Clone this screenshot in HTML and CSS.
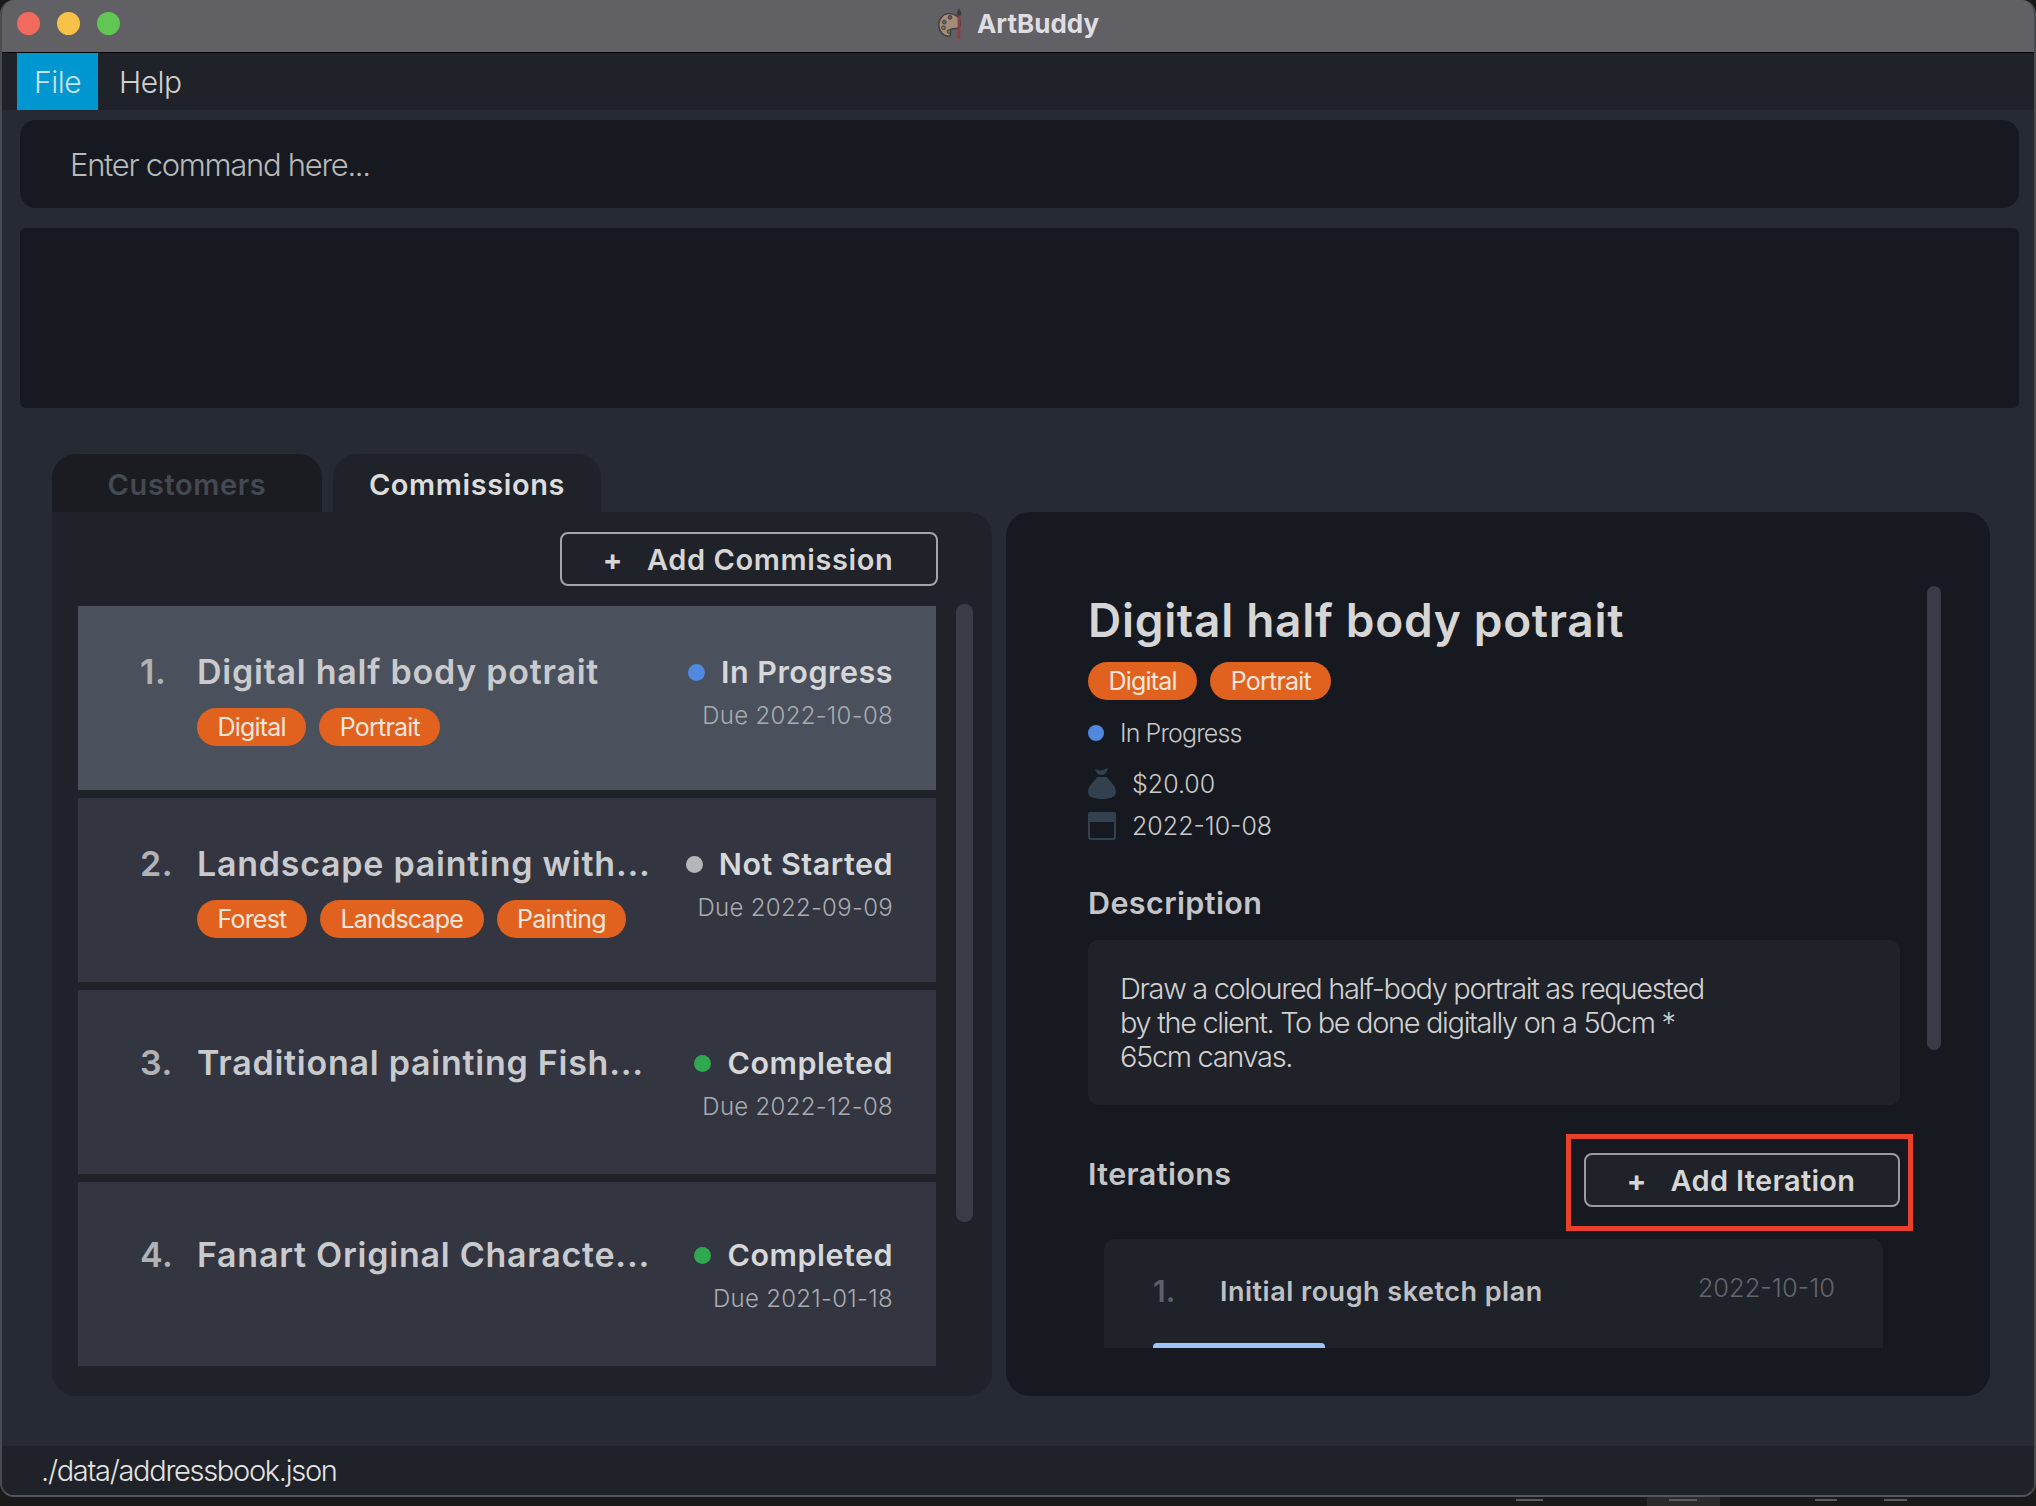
FILE: index.html
```html
<!DOCTYPE html>
<html lang="en">

<head>
    <meta charset="utf-8" />
    <title>ArtBuddy</title>
    <link rel="stylesheet" href="styles.css">
</head>

<body>
    <div class="window">
        <header class="titlebar">
            <div class="lights">
                <span class="light red"></span>
                <span class="light yellow"></span>
                <span class="light green"></span>
            </div>
            <div class="app-name">
                <svg class="palette" width="28" height="32" viewBox="0 0 28 34">
                    <path d="M12 6C5 6 1 12 1 18c0 7 5 12 10 12 3 0 3-2 2-4-1-3 1-4 4-4 4 0 7-2 7-6 0-6-6-10-12-10z" fill="#a08e78" stroke="#3f3d40" stroke-width="1.500" />
                    <circle cx="7" cy="15" r="2" fill="#4a6a8a" stroke="#3f3d40" />
                    <circle cx="13" cy="10" r="2" fill="#8a4a5a" stroke="#3f3d40" />
                    <circle cx="6" cy="21" r="2" fill="#8a7a3a" stroke="#3f3d40" />
                    <circle cx="12" cy="25" r="2" fill="#5a7a4a" stroke="#3f3d40" />
                    <path d="M21 8h3v25h-3z" fill="#8a3f4a" />
                    <path d="M20 8c0-3 1-6 2.500-8 1.500 2 2.500 5 2.500 8z" fill="#3f3d40" />
                </svg>
                <span>ArtBuddy</span>
            </div>
        </header>

        <nav class="menubar">
            <span class="menu-item active">File</span>
            <span class="menu-item">Help</span>
        </nav>

        <div class="command-box">Enter command here...</div>
        <div class="result-box"></div>

        <main class="content">
            <section class="left">
                <div class="tabs">
                    <span class="tab">Customers</span>
                    <span class="tab selected">Commissions</span>
                </div>
                <div class="left-panel">
                    <div class="left-inner">
                        <div class="add-row">
                            <button class="outline-btn add-commission"><span class="plus">+</span>Add Commission</button>
                        </div>
                        <ul class="commission-list">
                            <li class="commission highlighted">
                                <span class="index">1.</span>
                                <div class="commission-main">
                                    <div class="commission-title">Digital half body potrait</div>
                                    <div class="tags">
                                        <span class="tag">Digital</span>
                                        <span class="tag">Portrait</span>
                                    </div>
                                </div>
                                <div class="commission-side">
                                    <div class="status"><i class="dot blue"></i>In Progress</div>
                                    <div class="due">Due 2022-10-08</div>
                                </div>
                            </li>
                            <li class="commission">
                                <span class="index">2.</span>
                                <div class="commission-main">
                                    <div class="commission-title">Landscape painting with...</div>
                                    <div class="tags">
                                        <span class="tag">Forest</span>
                                        <span class="tag">Landscape</span>
                                        <span class="tag">Painting</span>
                                    </div>
                                </div>
                                <div class="commission-side">
                                    <div class="status"><i class="dot grey"></i>Not Started</div>
                                    <div class="due">Due 2022-09-09</div>
                                </div>
                            </li>
                            <li class="commission no-tags">
                                <span class="index">3.</span>
                                <div class="commission-main">
                                    <div class="commission-title">Traditional painting Fish...</div>
                                </div>
                                <div class="commission-side">
                                    <div class="status"><i class="dot green"></i>Completed</div>
                                    <div class="due">Due 2022-12-08</div>
                                </div>
                            </li>
                            <li class="commission no-tags">
                                <span class="index">4.</span>
                                <div class="commission-main">
                                    <div class="commission-title">Fanart Original Characte...</div>
                                </div>
                                <div class="commission-side">
                                    <div class="status"><i class="dot green"></i>Completed</div>
                                    <div class="due">Due 2021-01-18</div>
                                </div>
                            </li>
                        </ul>
                    </div>
                    <div class="scrollbar left-scroll"></div>
                </div>
            </section>

            <section class="detail">
                <div class="detail-inner">
                    <h1 class="detail-title">Digital half body potrait</h1>
                    <div class="tags detail-tags">
                        <span class="tag">Digital</span>
                        <span class="tag">Portrait</span>
                    </div>
                    <div class="detail-status"><i class="dot blue small"></i>In Progress</div>
                    <div class="meta meta-price">
                        <svg width="28" height="32" viewBox="0 0 28 32">
                            <path d="M7 1c3 1 5 2 8 1l5-2-2 5-3 2h-3C10 7 8 4 7 1z" fill="#33414f" />
                            <path d="M9 9h10c2 4 9 8 9 15 0 5-6 7-14 7S0 29 0 24c0-7 7-11 9-15z" fill="#33414f" />
                        </svg>
                        <span>$20.00</span>
                    </div>
                    <div class="meta">
                        <svg width="28" height="28" viewBox="0 0 28 28">
                            <rect x="0" y="0" width="28" height="10" rx="2" fill="#33414f" />
                            <rect x="1" y="1" width="26" height="26" rx="2" fill="none" stroke="#33414f" stroke-width="2" />
                        </svg>
                        <span>2022-10-08</span>
                    </div>
                    <h2 class="section-title description-title">Description</h2>
                    <p class="description">Draw a coloured half-body portrait as requested<br>by the client. To be done digitally on a 50cm *<br>65cm canvas.</p>
                    <div class="iterations-head">
                        <h2 class="section-title iterations-title">Iterations</h2>
                        <button class="outline-btn add-iteration"><span class="plus">+</span>Add Iteration</button>
                    </div>
                    <div class="iteration">
                        <div class="iteration-row">
                            <span class="iteration-index">1.</span>
                            <span class="iteration-title">Initial rough sketch plan</span>
                            <span class="iteration-date">2022-10-10</span>
                        </div>
                        <div class="iteration-image"></div>
                    </div>
                </div>
                <div class="scrollbar detail-scroll"></div>
                <div class="annotation"></div>
            </section>
        </main>

        <footer class="statusbar">./data/addressbook.json</footer>
    </div>
    <div class="desktop">
        <span class="desktop-block"></span>
        <span class="desktop-mark mark-a"></span>
        <span class="desktop-mark mark-b"></span>
        <span class="desktop-mark mark-c"></span>
        <span class="desktop-mark mark-d"></span>
    </div>
</body>

</html>
```

FILE: styles.css
```css
*,
*::before,
*::after {
    margin: 0;
    padding: 0;
    box-sizing: border-box;
}

html,
body {
    height: 100%;
    overflow: hidden;
}

body {
    background: #1a1a1b;
    font-family: Inter, "Liberation Sans", sans-serif;
    color: #d6d6d6;
}

.window {
    height: 1497px;
    display: flex;
    flex-direction: column;
    background: #262a32;
    border-radius: 14px;
    border-left: 2px solid #4a4b50;
    border-right: 2px solid #4a4b50;
    border-bottom: 2px solid #55565b;
    overflow: hidden;
}

.titlebar {
    height: 53px;
    flex: none;
    position: relative;
    display: flex;
    align-items: center;
    justify-content: center;
    padding-bottom: 5px;
    background: #616065;
    border-bottom: 1px solid #050505;
}

.lights {
    position: absolute;
    left: 15px;
    top: 12px;
    display: flex;
    gap: 17px;
}

.light {
    width: 23px;
    height: 23px;
    border-radius: 50%;
}

.light.red { background: #f26a5e; }
.light.yellow { background: #f8c14a; }
.light.green { background: #62c654; }

.app-name {
    display: flex;
    align-items: center;
    gap: 12px;
    font-size: 26px;
    font-weight: 700;
    color: #dfdde2;
}

.menubar {
    height: 57px;
    flex: none;
    display: flex;
    padding-left: 15px;
    background: #1f2229;
}

.menu-item {
    display: flex;
    align-items: center;
    padding-left: 21px;
    font-size: 30px;
    letter-spacing: -0.5px;
    font-weight: 300;
    color: #d0d0d0;
}

.menu-item.active {
    width: 81px;
    padding-left: 17px;
    background: #0096cf;
    color: #c6e4f0;
}

.command-box {
    height: 88px;
    flex: none;
    margin: 10px 15px 0 18px;
    padding-left: 50px;
    display: flex;
    align-items: center;
    background: #161920;
    border-radius: 16px;
    font-size: 31px;
    font-weight: 300;
    letter-spacing: -1.3px;
    color: #b9b9b9;
}

.result-box {
    height: 180px;
    flex: none;
    margin: 20px 15px 0 18px;
    background: #161920;
    border-radius: 6px;
}

.content {
    flex: 1;
    min-height: 0;
    display: flex;
    gap: 14px;
    padding: 46px 45px 50px 50px;
}

.left {
    width: 940px;
    flex: none;
    display: flex;
    flex-direction: column;
}

.tabs {
    height: 58px;
    flex: none;
    display: flex;
    gap: 11px;
}

.tab {
    width: 270px;
    display: flex;
    align-items: center;
    justify-content: center;
    padding-top: 2px;
    background: #1a1c21;
    border-radius: 24px 24px 0 0;
    font-size: 29px;
    font-weight: 600;
    letter-spacing: 0.6px;
    color: #454952;
}

.tab.selected {
    width: 268px;
    background: #1f2229;
    color: #dcdcdc;
}

.left-panel {
    flex: 1;
    min-height: 0;
    display: flex;
    background: #1f2229;
    border-radius: 0 24px 24px 24px;
    padding: 20px 19px 30px 26px;
}

.left-inner {
    width: 858px;
    flex: none;
    display: flex;
    flex-direction: column;
}

.add-row {
    display: flex;
    justify-content: flex-end;
    margin: 0 -2px 20px 0;
}

.outline-btn {
    display: flex;
    align-items: center;
    justify-content: center;
    height: 54px;
    padding-right: 2px;
    background: #1f2229;
    border: 2px solid #a3a5ab;
    border-radius: 8px;
    font-family: inherit;
    font-size: 29px;
    font-weight: 600;
    letter-spacing: 0.6px;
    color: #d6d6d6;
}

.plus {
    margin-right: 24px;
    font-weight: 700;
}

.add-commission {
    width: 378px;
}

.commission-list {
    list-style: none;
    display: flex;
    flex-direction: column;
    gap: 8px;
}

.commission {
    height: 184px;
    display: flex;
    padding: 46px 43px 0 62px;
    background: #333640;
    color: #c9cacd;
}

.commission.highlighted {
    background: #4b515c;
}

.commission.no-tags {
    padding-top: 53px;
}

.index {
    width: 57px;
    flex: none;
    font-size: 34px;
    font-weight: 600;
    line-height: 40px;
    letter-spacing: 0.5px;
    color: #b0b2b6;
}

.commission-main {
    flex: 1;
    min-width: 0;
}

.commission-title {
    font-size: 34px;
    font-weight: 600;
    line-height: 40px;
    letter-spacing: 0.75px;
    white-space: nowrap;
}

.tags {
    display: flex;
    gap: 13px;
    margin-top: 16px;
}

.tag {
    height: 38px;
    display: flex;
    align-items: center;
    padding: 0 20.5px;
    background: #e0621e;
    border-radius: 19px;
    font-size: 25px;
    font-weight: 400;
    letter-spacing: -0.8px;
    color: #f4e6dc;
}

.commission-side {
    flex: none;
    display: flex;
    flex-direction: column;
    align-items: flex-end;
}

.status {
    display: flex;
    align-items: center;
    font-size: 30.5px;
    font-weight: 600;
    line-height: 40px;
    letter-spacing: 0.5px;
    color: #d6d7d9;
}

.dot {
    width: 17px;
    height: 17px;
    margin-right: 16px;
    border-radius: 50%;
}

.dot.blue { background: #4f8ae0; }
.dot.grey { background: #b4b6b9; }
.dot.green { background: #2fa84f; }

.due {
    margin-top: 9px;
    font-size: 24px;
    font-weight: 300;
    letter-spacing: 0.3px;
    color: #a9abb0;
}

.scrollbar {
    background: #393c46;
    border-radius: 8px;
}

.left-scroll {
    width: 17px;
    height: 618px;
    margin: 72px 0 0 20px;
}

.detail {
    width: 984px;
    flex: none;
    position: relative;
    display: flex;
    margin-top: 58px;
    background: #161920;
    border-radius: 24px;
    padding: 74px 49px 48px 82px;
}

.detail-inner {
    width: 812px;
    flex: none;
    padding-top: 6px;
    overflow: hidden;
}

.detail-title {
    font-size: 46px;
    font-weight: 600;
    line-height: 56px;
    letter-spacing: 0.7px;
    color: #d6d6d6;
}

.detail-tags {
    margin-top: 14px;
}

.detail-status {
    display: flex;
    align-items: center;
    margin-top: 15px;
    font-size: 25px;
    font-weight: 300;
    letter-spacing: -0.9px;
    color: #c6c6c6;
    line-height: 36px;
}

.dot.small {
    width: 16px;
    height: 16px;
}

.meta {
    display: flex;
    align-items: center;
    gap: 16px;
    height: 42px;
    font-size: 25px;
    font-weight: 300;
    color: #c9c9c9;
}

.meta-price {
    margin-top: 12px;
}

.section-title {
    font-size: 30.5px;
    font-weight: 600;
    letter-spacing: 0.4px;
    color: #c4c5c8;
}

.description-title {
    margin-top: 37px;
}

.description {
    height: 165px;
    margin-top: 19px;
    padding: 32px 32px 0;
    background: #1f2229;
    border-radius: 10px;
    font-size: 29px;
    font-weight: 300;
    line-height: 34px;
    letter-spacing: -1.35px;
    color: #d0d0d0;
}

.iterations-head {
    height: 134px;
    display: flex;
    justify-content: space-between;
    padding-top: 48px;
}

.iterations-title {
    margin-top: 2px;
}

.add-iteration {
    width: 316px;
    border-color: #9a9ca3;
    letter-spacing: 0.3px;
}

.annotation {
    position: absolute;
    left: 560px;
    top: 622px;
    width: 347px;
    height: 97px;
    border: 5px solid #e8402a;
}

.iteration {
    width: 779px;
    height: 110px;
    margin-left: 16px;
    padding: 34px 48px 0 49px;
    background: #1f2229;
    border-radius: 10px 10px 0 0;
    overflow: hidden;
}

.iteration-row {
    display: flex;
    align-items: center;
}

.iteration-index {
    width: 67px;
    font-size: 30px;
    font-weight: 600;
    color: #5c5f68;
}

.iteration-title {
    flex: 1;
    font-size: 27px;
    font-weight: 600;
    letter-spacing: 0.5px;
    color: #bfc0c4;
}

.iteration-date {
    margin-top: -8px;
    font-size: 25.5px;
    font-weight: 300;
    color: #62656e;
}

.iteration-image {
    width: 172px;
    height: 40px;
    margin-top: 34px;
    background: #9dc3f7;
    border-radius: 4px 4px 0 0;
}

.detail-scroll {
    width: 15px;
    height: 464px;
    margin-left: 27px;
}

.statusbar {
    height: 49px;
    flex: none;
    padding-left: 39px;
    display: flex;
    align-items: center;
    background: #1f2229;
    font-size: 29px;
    font-weight: 300;
    letter-spacing: -1.3px;
    color: #e2e2e2;
}

.desktop {
    height: 9px;
    position: relative;
}

.desktop-block {
    position: absolute;
    left: 1647px;
    top: 0;
    width: 73px;
    height: 9px;
    background: #2b2b2c;
}

.desktop-mark {
    position: absolute;
    top: 2px;
    height: 2px;
    background: #5a5b5d;
}

.mark-a { left: 1516px; width: 27px; }
.mark-b { left: 1669px; width: 28px; }
.mark-c { left: 1815px; width: 22px; }
.mark-d { left: 1884px; width: 23px; }
```
